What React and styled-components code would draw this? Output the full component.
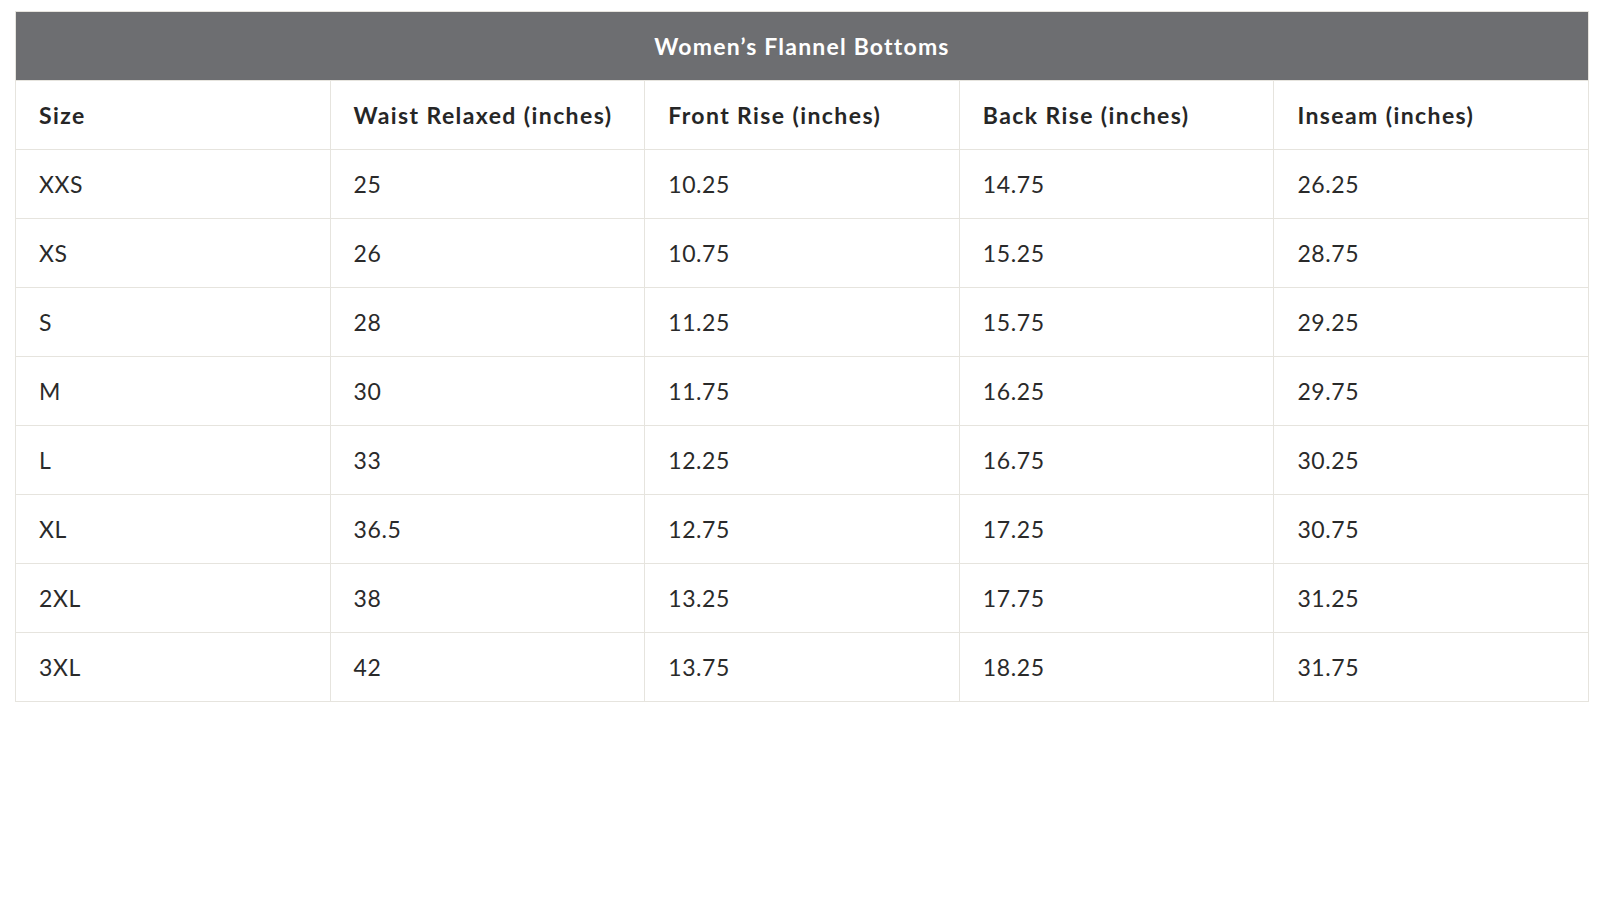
import React from "react";
import styled, { createGlobalStyle } from "styled-components";

const columns = [
  "Size",
  "Waist Relaxed (inches)",
  "Front Rise (inches)",
  "Back Rise (inches)",
  "Inseam (inches)",
];

const rows = [
  ["XXS", "25", "10.25", "14.75", "26.25"],
  ["XS", "26", "10.75", "15.25", "28.75"],
  ["S", "28", "11.25", "15.75", "29.25"],
  ["M", "30", "11.75", "16.25", "29.75"],
  ["L", "33", "12.25", "16.75", "30.25"],
  ["XL", "36.5", "12.75", "17.25", "30.75"],
  ["2XL", "38", "13.25", "17.75", "31.25"],
  ["3XL", "42", "13.75", "18.25", "31.75"],
];

function App() {
  return (
    <>
      <GlobalStyle />
      <Page>
        <SizeTable>
          <thead>
            <tr>
              <TitleCell colSpan={columns.length}>Women’s Flannel Bottoms</TitleCell>
            </tr>
            <tr>
              {columns.map((col) => (
                <HeadCell key={col}>{col}</HeadCell>
              ))}
            </tr>
          </thead>
          <tbody>
            {rows.map((row) => (
              <tr key={row[0]}>
                {row.map((value, i) => (
                  <Cell key={i}>{value}</Cell>
                ))}
              </tr>
            ))}
          </tbody>
        </SizeTable>
      </Page>
    </>
  );
}

const GlobalStyle = createGlobalStyle`
  body {
    margin: 0;
    background: #fff;
    font-family: "Lato", "Noto Sans", sans-serif;
    color: #2a2a2a;
  }
`;

const Page = styled.div`
  padding: 11px 15px 0 15px;
`;

const SizeTable = styled.table`
  width: 100%;
  border-collapse: collapse;
  table-layout: fixed;
  border: 1px solid #e6e4de;
`;

const TitleCell = styled.th`
  height: 68px;
  background: #6d6e71;
  color: #fff;
  font-size: 23px;
  font-weight: 700;
  letter-spacing: 1.2px;
  text-align: center;
  border: 1px solid #e6e4de;
  padding: 0;
`;

const HeadCell = styled.th`
  height: 68px;
  padding: 0 23px;
  text-align: left;
  font-size: 23px;
  font-weight: 700;
  letter-spacing: 1.4px;
  color: #262626;
  border: 1px solid #e6e4de;
`;

const Cell = styled.td`
  height: 68px;
  padding: 0 23px;
  font-size: 23px;
  font-weight: 400;
  letter-spacing: 0.6px;
  color: #2a2a2a;
  border: 1px solid #e6e4de;
`;

export default App;
